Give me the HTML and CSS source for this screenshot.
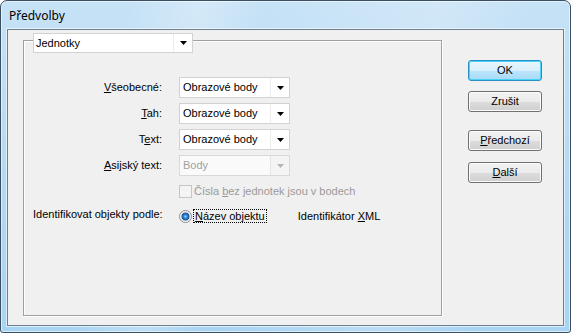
FILE: index.html
```html
<!DOCTYPE html>
<html lang="cs">
<head>
  <meta charset="UTF-8" />
  <title>Předvolby</title>
  <link rel="stylesheet" href="styles.css">
</head>
<body>
  <div class="window">
    <!-- Title bar -->
    <div class="titlebar">Předvolby</div>

    <div class="client">
      <!-- Group box -->
      <div class="group">
        <div class="combo section-combo">
          <span class="combo-value">Jednotky</span>
          <span class="combo-arrow"><svg width="7" height="4"><path d="M0 0h7L3.5 4z" /></svg></span>
        </div>

        <div class="form-grid">
          <label class="field-label"><u>V</u>šeobecné:</label>
          <div class="combo">
            <span class="combo-value">Obrazové body</span>
            <span class="combo-arrow"><svg width="7" height="4"><path d="M0 0h7L3.5 4z" /></svg></span>
          </div>

          <label class="field-label"><u>T</u>ah:</label>
          <div class="combo">
            <span class="combo-value">Obrazové body</span>
            <span class="combo-arrow"><svg width="7" height="4"><path d="M0 0h7L3.5 4z" /></svg></span>
          </div>

          <label class="field-label">T<u>e</u>xt:</label>
          <div class="combo">
            <span class="combo-value">Obrazové body</span>
            <span class="combo-arrow"><svg width="7" height="4"><path d="M0 0h7L3.5 4z" /></svg></span>
          </div>

          <label class="field-label"><u>A</u>sijský text:</label>
          <div class="combo disabled">
            <span class="combo-value">Body</span>
            <span class="combo-arrow"><svg width="7" height="4"><path d="M0 0h7L3.5 4z" /></svg></span>
          </div>

          <span></span>
          <div class="check-row">
            <span class="checkbox"></span>
            <span class="check-label">Čísla <u>b</u>ez jednotek jsou v bodech</span>
          </div>

          <label class="field-label ident-label">Identifikovat objekty podle:</label>
          <div class="radio-row">
            <span class="radio checked"></span>
            <span class="focus-label"><u>N</u>ázev objektu</span>
            <span class="radio-text">Identifikátor <u>X</u>ML</span>
          </div>
        </div>
      </div>

      <!-- Buttons -->
      <div class="buttons">
        <div class="btn btn-default">OK</div>
        <div class="btn btn-cancel">Zrušit</div>
        <div class="btn btn-prev"><u>P</u>ředchozí</div>
        <div class="btn btn-next"><u>D</u>alší</div>
      </div>
    </div>
  </div>
</body>
</html>
```

FILE: styles.css
```css
body {
  margin: 0;
  font-family: "Liberation Sans", Arial, sans-serif;
  font-size: 11px;
  color: #000;
  background: #fff;
}
.window {
  width: 571px;
  height: 333px;
  box-sizing: border-box;
  border: 1px solid #3b4f63;
  border-radius: 7px 7px 3px 3px;
  padding: 0 6px 6px 6px;
  display: flex;
  flex-direction: column;
  background:
    linear-gradient(100deg, rgba(255,255,255,0) 20%, rgba(255,255,255,.25) 32%, rgba(255,255,255,0) 42%, rgba(255,255,255,.2) 70%, rgba(255,255,255,0) 85%),
    linear-gradient(180deg, #c6e2f6 0%, #b2d8f2 60%, #a8d4f3 100%);
  box-shadow: inset 0 0 0 1px rgba(255,255,255,.55);
}
.titlebar {
  height: 28px;
  line-height: 29px;
  padding-left: 2px;
  font-family: "Noto Sans", "Open Sans", sans-serif;
  font-size: 12px;
  color: #000;
}
.client {
  flex: 1;
  display: flex;
  align-items: flex-start;
  padding: 10px 0 0 15px;
  border: 1px solid #6c7e90;
  background: #f0f0f0;
  box-shadow: 0 0 0 1px rgba(255,255,255,.6);
}
.group {
  width: 419px;
  height: 276px;
  box-sizing: border-box;
  padding-left: 9px;
  border: 1px solid #a0a0a0;
  box-shadow: 1px 1px 0 #fff, inset 1px 1px 0 #fff;
}
.combo {
  display: flex;
  width: 111px;
  height: 21px;
  box-sizing: border-box;
  border: 1px solid #d2d2d2;
  background: #fff;
}
.combo-value {
  flex: 1;
  padding-left: 3px;
  line-height: 19px;
  white-space: nowrap;
  border-right: 1px solid #ececec;
}
.combo-arrow {
  width: 18px;
  display: flex;
  align-items: center;
  justify-content: center;
}
.combo-arrow svg {
  fill: #000;
}
.section-combo {
  width: 160px;
  height: 20px;
  margin-top: -8px;
}
.section-combo .combo-value {
  line-height: 18px;
  padding-left: 2px;
}
.combo.disabled {
  background: #f4f4f4;
  border-color: #d9d9d9;
  color: #a0a0a0;
}
.combo.disabled .combo-value {
  background: #fafafa;
  border-right-color: #e4e4e4;
}
.combo.disabled svg {
  fill: #b5b5b5;
}
.form-grid {
  display: grid;
  grid-template-columns: 135px auto;
  grid-auto-rows: 21px;
  column-gap: 11px;
  row-gap: 5px;
  margin-top: 24px;
}
.field-label {
  text-align: right;
  padding-right: 6px;
  line-height: 21px;
  white-space: nowrap;
}
.ident-label {
  margin-top: -3px;
}
.check-row {
  display: flex;
  align-items: center;
  margin-top: -1px;
  color: #9a9a9a;
}
.checkbox {
  width: 13px;
  height: 13px;
  box-sizing: border-box;
  border: 1px solid #c6c6c6;
  background: #f4f4f4;
}
.check-label {
  margin-left: 2px;
}
.radio-row {
  display: flex;
  align-items: center;
  margin-top: -3px;
  white-space: nowrap;
}
.radio {
  width: 13px;
  height: 13px;
  box-sizing: border-box;
  border: 1px solid #8e8e8e;
  border-radius: 50%;
  background: radial-gradient(circle, #9fe2fc 0, #3a8fd6 1.5px, #15569e 3.6px, #dcdcdc 4.3px, #ffffff 5.5px);
}
.focus-label {
  margin-left: 1px;
  padding: 0 1px;
  line-height: 12px;
  border: 1px dotted #000;
}
.radio-text {
  margin-left: 31px;
}
.buttons {
  display: flex;
  flex-direction: column;
  margin-left: 26px;
  padding-top: 20px;
}
.btn {
  width: 74px;
  height: 21px;
  box-sizing: border-box;
  border: 1px solid #707070;
  border-radius: 3px;
  text-align: center;
  line-height: 19px;
  background: linear-gradient(180deg, #f2f2f2 0%, #ebebeb 50%, #dddddd 51%, #cfcfcf 100%);
  box-shadow: inset 0 0 0 1px #fbfbfb;
}
.btn-default {
  border-color: #2c8fc4;
  background: linear-gradient(180deg, #eaf6fd 0%, #d9f0fc 50%, #bee6fd 51%, #a7d9f5 100%);
  box-shadow: inset 0 0 0 1px #48d4f8;
}
.btn-cancel {
  margin-top: 10px;
}
.btn-prev {
  margin-top: 18px;
}
.btn-next {
  margin-top: 11px;
}
```
